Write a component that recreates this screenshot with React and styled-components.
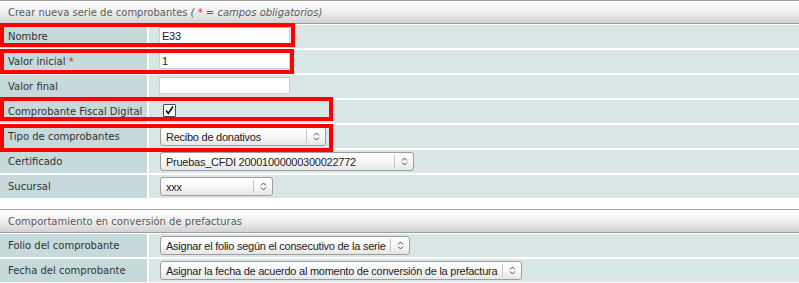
import React from 'react';
import styled, { createGlobalStyle } from 'styled-components';

const GlobalStyle = createGlobalStyle`
  html, body {
    margin: 0;
    padding: 0;
    background: #ffffff;
  }
  body {
    font-family: "DejaVu Sans", Verdana, sans-serif;
    font-size: 10px;
    color: #333333;
  }
`;

const Page = styled.div`
  width: 799px;
`;

const Section = styled.section`
  position: relative;
  margin-bottom: ${(p) => p.$spaceAfter || 0}px;
`;

const SectionHeader = styled.div`
  height: 24px;
  box-sizing: border-box;
  border-top: 1px solid #a2a2a2;
  border-bottom: 1px solid #9c9c9c;
  background: linear-gradient(to bottom, #ffffff 0%, #f1f1f1 45%, #d3d3d3 100%);
  color: #5a5a5a;
  padding-left: 8px;
  display: flex;
  align-items: center;
  margin-bottom: 1px;
`;

const Hint = styled.em`
  font-style: italic;
  margin-left: 3px;
`;

const Required = styled.span`
  color: #ee2222;
  font-style: normal;
`;

const Rows = styled.div`
  display: grid;
  grid-template-columns: 147px 1fr;
  grid-auto-rows: 23px;
  column-gap: 2px;
  row-gap: 2px;
`;

const Label = styled.div`
  background: #c6d9db;
  display: flex;
  align-items: center;
  padding-left: 8px;
  color: #333333;
  white-space: nowrap;
`;

const Value = styled.div`
  background: #d8e6e6;
  display: flex;
  align-items: flex-start;
  padding-left: ${(p) => p.$indent || 10}px;
  padding-top: ${(p) => p.$top || 2}px;
  box-sizing: border-box;
`;

const TextInput = styled.input`
  width: 131px;
  height: 17px;
  box-sizing: border-box;
  border: 1px solid #c9d0d0;
  border-top-color: #b9c0c0;
  background: #ffffff;
  padding: 0 2px;
  margin: 0;
  font-family: "Liberation Sans", Arial, sans-serif;
  font-size: 11px;
  letter-spacing: -0.25px;
  color: #222222;
  outline: none;
`;

const CheckBox = styled.span`
  width: 13px;
  height: 13px;
  box-sizing: border-box;
  border: 1px solid #4a4a4a;
  border-radius: 1px;
  background: #ffffff;
  display: flex;
  align-items: center;
  justify-content: center;
`;

const SelectBox = styled.div`
  width: ${(p) => p.$width}px;
  height: 19px;
  box-sizing: border-box;
  border: 1px solid #9d9d9d;
  border-radius: 3px;
  background: linear-gradient(to bottom, #ffffff 0%, #f8f8f8 50%, #e6e6e6 100%);
  display: flex;
  align-items: center;
  font-family: "Liberation Sans", Arial, sans-serif;
  font-size: 11px;
  letter-spacing: -0.25px;
  color: #222222;
`;

const SelectText = styled.span`
  flex: 1;
  padding-left: 5px;
  white-space: nowrap;
  overflow: hidden;
`;

const ArrowZone = styled.span`
  width: 18px;
  height: 13px;
  border-left: 1px solid #c6c6c6;
  display: flex;
  align-items: center;
  justify-content: center;
`;

const Highlight = styled.div`
  position: absolute;
  left: 0;
  top: ${(p) => p.$top}px;
  width: ${(p) => p.$width}px;
  height: ${(p) => p.$height}px;
  box-sizing: border-box;
  border: 4px solid #ff0000;
  pointer-events: none;
`;

const Chevrons = () => (
  <svg width="7" height="11" viewBox="0 0 7 11" fill="none" stroke="#4a4a4a" strokeWidth="1">
    <path d="M1 4.5 L3.5 2 L6 4.5" />
    <path d="M1 6.5 L3.5 9 L6 6.5" />
  </svg>
);

const Select = ({ width, children }) => (
  <SelectBox $width={width}>
    <SelectText>{children}</SelectText>
    <ArrowZone>
      <Chevrons />
    </ArrowZone>
  </SelectBox>
);

const Check = () => (
  <CheckBox>
    <svg width="11" height="11" viewBox="0 0 11 11" fill="none" stroke="#111111" strokeWidth="1.6">
      <path d="M2 5.5 L4.3 8.3 L9 1.5" />
    </svg>
  </CheckBox>
);

const App = () => {
  return (
    <Page>
      <GlobalStyle />
      <Section $spaceAfter={11}>
        <SectionHeader>
          Crear nueva serie de comprobantes
          <Hint>
            ( <Required>*</Required> = campos obligatorios)
          </Hint>
        </SectionHeader>
        <Rows>
          <Label>Nombre</Label>
          <Value>
            <TextInput defaultValue="E33" />
          </Value>
          <Label>
            Valor inicial&nbsp;<Required>*</Required>
          </Label>
          <Value>
            <TextInput defaultValue="1" />
          </Value>
          <Label>Valor final</Label>
          <Value>
            <TextInput defaultValue="" />
          </Value>
          <Label>Comprobante Fiscal Digital</Label>
          <Value $indent={14} $top={4}>
            <Check />
          </Value>
          <Label>Tipo de comprobantes</Label>
          <Value $indent={11}>
            <Select width={166}>Recibo de donativos</Select>
          </Value>
          <Label>Certificado</Label>
          <Value $indent={11}>
            <Select width={254}>Pruebas_CFDI 20001000000300022772</Select>
          </Value>
          <Label>Sucursal</Label>
          <Value $indent={11}>
            <Select width={113}>xxx</Select>
          </Value>
        </Rows>
        <Highlight $top={23} $width={295} $height={24} />
        <Highlight $top={49} $width={294} $height={25} />
        <Highlight $top={97} $width={333} $height={24} />
        <Highlight $top={124} $width={333} $height={28} />
      </Section>
      <Section>
        <SectionHeader>Comportamiento en conversión de prefacturas</SectionHeader>
        <Rows>
          <Label>Folio del comprobante</Label>
          <Value $indent={11}>
            <Select width={250}>Asignar el folio según el consecutivo de la serie</Select>
          </Value>
          <Label>Fecha del comprobante</Label>
          <Value $indent={11}>
            <Select width={362}>Asignar la fecha de acuerdo al momento de conversión de la prefactura</Select>
          </Value>
        </Rows>
      </Section>
    </Page>
  );
};

export default App;
